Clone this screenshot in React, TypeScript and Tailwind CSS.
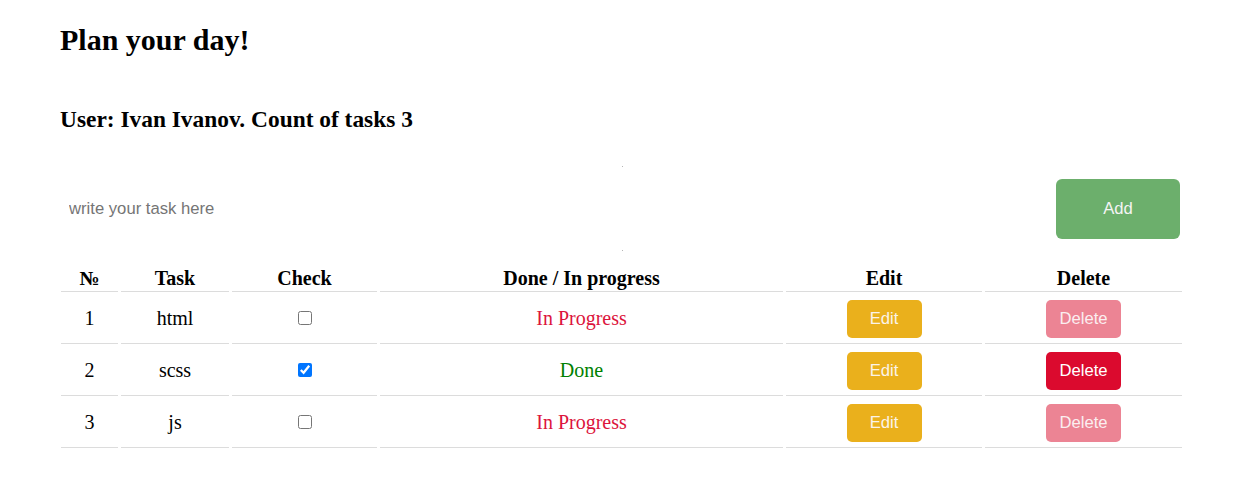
import React from "react";

type Task = { id: number; title: string; done: boolean };

const tasks: Task[] = [
  { id: 1, title: "html", done: false },
  { id: 2, title: "scss", done: true },
  { id: 3, title: "js", done: false },
];

export default function App() {
  return (
    <div className="min-h-[496px] bg-white pl-[60px] pt-[23px] text-black font-['Liberation_Serif','Times_New_Roman',serif]">
      <h1 className="text-[30px] font-bold leading-[34.5px]">Plan your day!</h1>
      <h3 className="mt-[48.5px] text-[23.4px] font-bold leading-[27px]">
        User: Ivan Ivanov. Count of tasks 3
      </h3>

      <form
        className="relative mt-[33px] flex h-[85px] w-[1124px] items-center"
        onSubmit={(e) => e.preventDefault()}
      >
        <span className="absolute left-[562px] top-0 h-px w-px bg-[#b5b5b5]" />
        <span className="absolute left-[562px] top-[84px] h-px w-px bg-[#b5b5b5]" />
        <input
          type="text"
          placeholder="write your task here"
          className="h-full flex-1 bg-transparent pl-[9px] text-[16.67px] outline-none placeholder:text-[#757575] font-['Liberation_Sans',Arial,sans-serif]"
        />
        <button
          type="submit"
          className="mr-[4px] h-[60px] w-[124px] rounded-[6px] bg-[#6caf6c] text-[16.67px] text-[#f4f4f4] font-['Liberation_Sans',Arial,sans-serif]"
        >
          Add
        </button>
      </form>

      <table className="-ml-[2px] mt-[11px] table-fixed border-separate border-spacing-x-[3px] border-spacing-y-[2px] text-[20px] w-[1127px]">
        <colgroup>
          <col className="w-[57px]" />
          <col className="w-[108px]" />
          <col className="w-[145px]" />
          <col className="w-[403px]" />
          <col className="w-[196px]" />
          <col className="w-[197px]" />
        </colgroup>
        <thead>
          <tr>
            {["№", "Task", "Check", "Done / In progress", "Edit", "Delete"].map((h) => (
              <th
                key={h}
                className="border-b border-[#dcdcdc] pb-[1px] pt-[3px] text-center font-bold leading-[23px]"
              >
                {h}
              </th>
            ))}
          </tr>
        </thead>
        <tbody>
          {tasks.map((t) => (
            <tr key={t.id}>
              <td className="h-[50px] border-b border-[#dcdcdc] text-center align-middle leading-[23px]">{t.id}</td>
              <td className="h-[50px] border-b border-[#dcdcdc] text-center align-middle leading-[23px]">{t.title}</td>
              <td className="h-[50px] border-b border-[#dcdcdc] text-center align-middle leading-[23px]">
                <input
                  type="checkbox"
                  defaultChecked={t.done}
                  className="m-0 h-[14px] w-[14px] translate-y-[-2px] align-middle"
                />
              </td>
              <td
                className={
                  "h-[50px] border-b border-[#dcdcdc] text-center align-middle leading-[23px] " +
                  (t.done ? "text-[#008000]" : "text-[#dc143c]")
                }
              >
                {t.done ? "Done" : "In Progress"}
              </td>
              <td className="h-[50px] border-b border-[#dcdcdc] text-center align-middle">
                <button className="h-[38px] w-[75px] rounded-[5px] bg-[#eab01c] align-middle text-[16.67px] text-[#fbf3e8] font-['Liberation_Sans',Arial,sans-serif]">
                  Edit
                </button>
              </td>
              <td className="h-[50px] border-b border-[#dcdcdc] text-center align-middle">
                <button
                  className={
                    "h-[38px] w-[75px] rounded-[5px] align-middle text-[16.67px] font-['Liberation_Sans',Arial,sans-serif] " +
                    (t.done ? "bg-[#db0a2e] text-white" : "bg-[#ec8494] text-[#fbeef0]")
                  }
                >
                  Delete
                </button>
              </td>
            </tr>
          ))}
        </tbody>
      </table>
    </div>
  );
}
